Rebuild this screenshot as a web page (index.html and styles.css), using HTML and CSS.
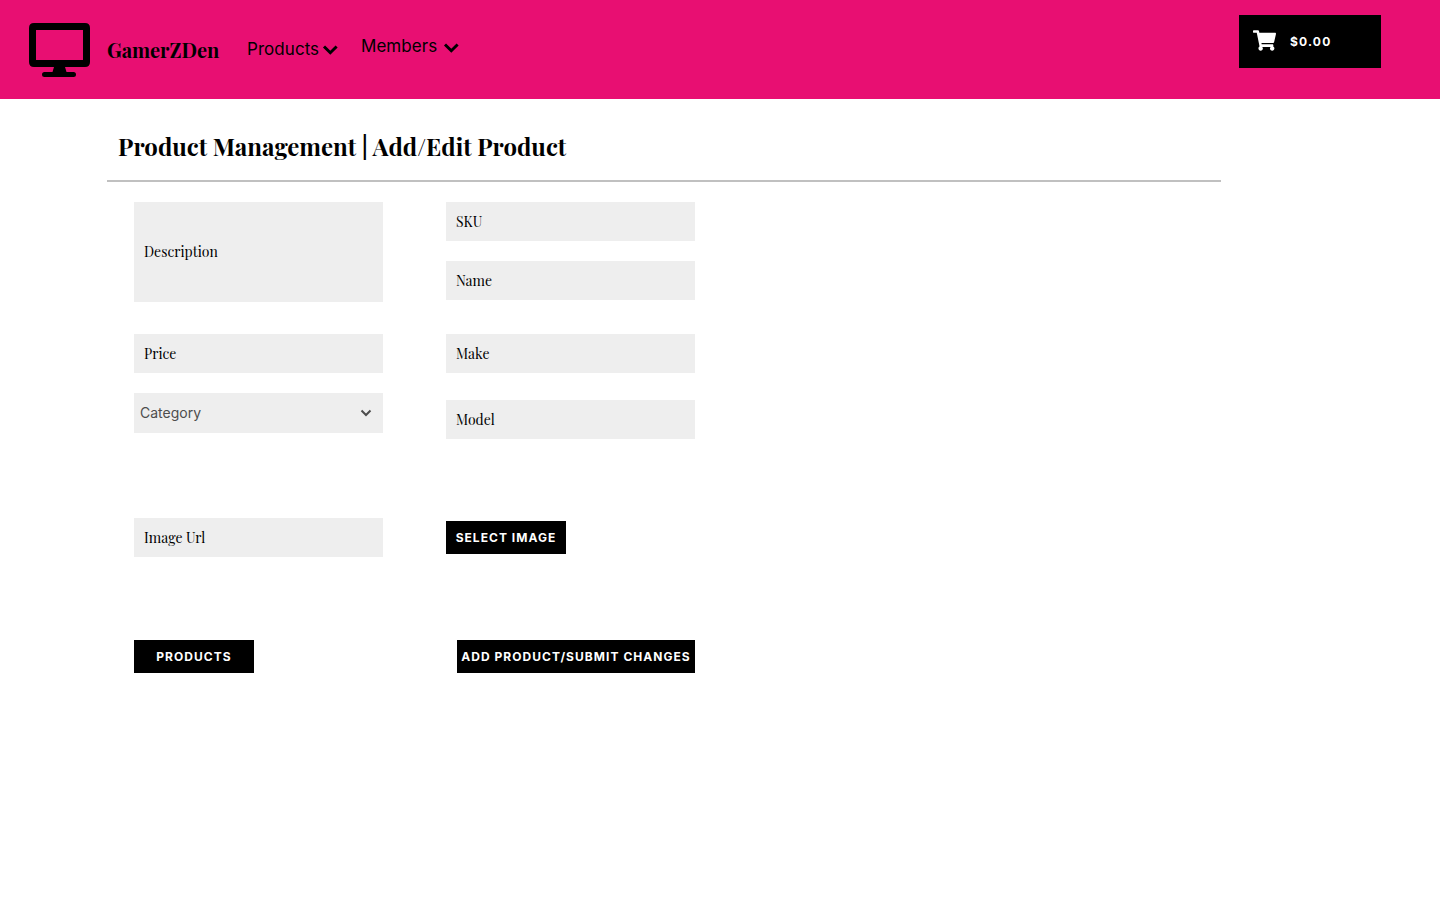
FILE: index.html
```html
<!DOCTYPE html>
<html lang="en">
<head>
<meta charset="utf-8">
<title>GamerZDen - Product Management</title>
<link rel="stylesheet" href="styles.css">
</head>
<body>
<header class="header">
  <svg class="logo" viewBox="0 0 61 54" aria-hidden="true"><path fill-rule="evenodd" d="M5 0H56Q61 0 61 5V39Q61 44 56 44H36L37.500 49H44.500Q47 49 47 51.500T44.500 54H15.500Q13 54 13 51.500T15.500 49H23.500L25 44H5Q0 44 0 39V5Q0 0 5 0ZM7 7V37H54V7Z"/></svg>
  <span class="brand">GamerZDen</span>
  <nav class="nav">
    <a class="nav-item products"><span>Products</span><svg class="chevron" viewBox="0 0 16 10"><path d="M2 1.500 8.300 7.700 14.600 1.500"/></svg></a>
    <a class="nav-item members"><span>Members</span><svg class="chevron" viewBox="0 0 16 10"><path d="M2 1.500 8.300 7.700 14.600 1.500"/></svg></a>
  </nav>
  <button class="cart"><svg class="cart-icon" viewBox="0 0 576 512"><path d="M528.120 301.319l47.273-208C578.806 78.301 567.391 64 551.990 64H159.208l-9.166-44.810C147.758 8.021 137.930 0 126.529 0H24C10.745 0 0 10.745 0 24v16c0 13.255 10.745 24 24 24h69.883l70.248 343.435C147.325 417.100 136 435.222 136 456c0 30.928 25.072 56 56 56s56-25.072 56-56c0-15.674-6.447-29.835-16.824-40h209.647C430.447 426.165 424 440.326 424 456c0 30.928 25.072 56 56 56s56-25.072 56-56c0-22.172-12.888-41.332-31.579-50.405l5.517-24.276c3.413-15.018-8.002-29.319-23.403-29.319H218.117l-6.545-32h293.145c11.206 0 20.920-7.754 23.403-18.681z"/></svg><span>$0.00</span></button>
</header>
<main class="page">
  <h1 class="title">Product Management | Add/Edit Product</h1>
  <form class="form">
    <div class="column">
      <div class="field description">Description</div>
      <div class="field price">Price</div>
      <div class="select"><span>Category</span><svg class="caret" viewBox="0 0 12 8"><path d="M1.500 1.500 6 6 10.500 1.500"/></svg></div>
      <div class="field image-url">Image Url</div>
      <button type="button" class="button to-products">PRODUCTS</button>
    </div>
    <div class="column">
      <div class="field sku">SKU</div>
      <div class="field name">Name</div>
      <div class="field make">Make</div>
      <div class="field model">Model</div>
      <button type="button" class="button select-image">SELECT IMAGE</button>
      <button type="button" class="button submit">ADD PRODUCT/SUBMIT CHANGES</button>
    </div>
  </form>
</main>
</body>
</html>
```
FILE: styles.css
```css
* { box-sizing: border-box; }
body { margin: 0; background: #fff; color: #000; font-family: Inter, sans-serif; }
button { border: 0; border-radius: 0; background: #000; color: #fff; font: 700 12px/15px Inter, sans-serif; letter-spacing: 1.04px; white-space: nowrap; }
svg { display: block; flex: none; }

.header { display: flex; align-items: flex-start; height: 99px; padding-left: 29px; padding-right: 59px; background: #e80f72; }
.logo { width: 61px; height: 54px; margin-top: 23px; }
.brand { width: 140px; padding: 37px 0 0 17px; font: 700 20px/26px "Playfair Display", "Liberation Serif", serif; white-space: nowrap; }
.nav { display: flex; align-items: flex-start; padding-left: 17px; font-size: 17px; line-height: 22px; letter-spacing: 0.05px; }
.nav-item { display: flex; }
.products { width: 114px; padding-top: 38px; }
.products span { width: 75px; }
.members { padding-top: 35px; }
.members span { width: 82px; }
.chevron { width: 16px; height: 10px; margin-top: 7px; }
.members .chevron { margin-top: 8px; }
.chevron path { fill: none; stroke: #000; stroke-width: 3; }
.cart { display: flex; align-items: center; width: 142px; height: 53px; margin: 15px 0 0 auto; padding: 0 0 0 14px; gap: 14px; }
.cart span { letter-spacing: 1.2px; }
.cart-icon { width: 23px; height: 21px; fill: #fff; margin-bottom: 2px; }

.page { width: 1114px; margin-left: 107px; }
.title { height: 83px; margin: 0; padding: 31px 0 0 11px; border-bottom: 2px solid #c0c0c0; font: 700 24px/32px "Playfair Display", "Liberation Serif", serif; letter-spacing: 0.02px; white-space: nowrap; }
.form { display: grid; grid-template-columns: 249px 249px; column-gap: 63px; padding: 20px 0 0 27px; }
.column { display: flex; flex-direction: column; align-items: flex-start; }
.field { display: flex; align-items: center; width: 100%; height: 39px; padding-left: 10px; background: #eee; font: 14px/19px "Playfair Display", "Liberation Serif", serif; }
.description { height: 100px; padding-bottom: 1px; }
.price { margin-top: 32px; }
.select { display: flex; align-items: center; justify-content: space-between; width: 100%; height: 40px; margin-top: 20px; padding: 0 11px 1px 6px; background: #eee; color: #4d4d4d; font-size: 14px; }
.caret { width: 12px; height: 8px; margin-top: 1px; }
.caret path { fill: none; stroke: #4d4d4d; stroke-width: 2; }
.image-url { margin-top: 85px; }
.button { width: 120px; height: 33px; padding: 0; text-align: center; }
.to-products { margin-top: 83px; }
.name { margin-top: 20px; }
.make { margin-top: 34px; }
.model { margin-top: 27px; }
.select-image { margin-top: 82px; }
.submit { width: 238px; margin: 86px 0 0 11px; }
```
